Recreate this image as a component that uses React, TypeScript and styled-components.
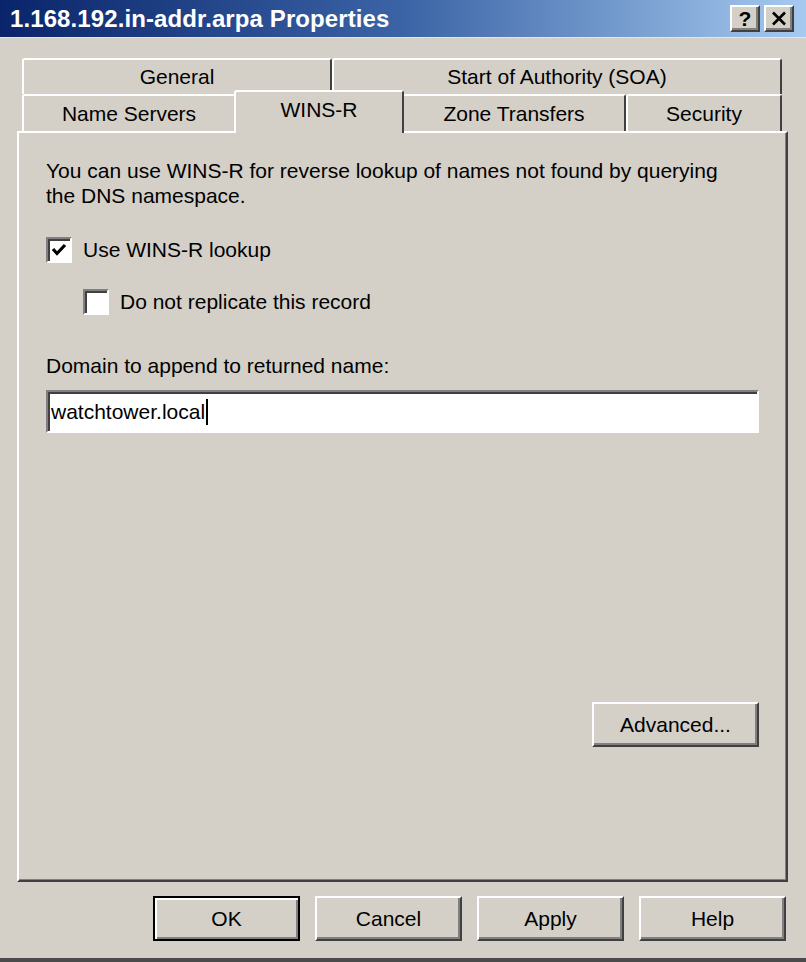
import * as React from 'react';
import styled, { createGlobalStyle, css } from 'styled-components';

const GlobalStyle = createGlobalStyle`
  html, body {
    margin: 0;
    padding: 0;
    background: #d4d0c8;
  }
  body {
    font-family: "Liberation Sans", Arial, sans-serif;
    color: #000;
  }
`;

const raised = css`
  border: 2px solid;
  border-color: #ffffff #404040 #404040 #ffffff;
  box-shadow: inset -2px -2px 0 #808080;
`;

const sunken = css`
  border: 2px solid;
  border-color: #808080 #ffffff #ffffff #808080;
  box-shadow: inset 2px 2px 0 #404040;
`;

const Window = styled.div`
  width: 806px;
  height: 962px;
  box-sizing: border-box;
  background: #d4d0c8;
  border-bottom: 4px solid #4a4a4a;
  display: flex;
  flex-direction: column;
  overflow: hidden;
`;

const TitleBar = styled.div`
  height: 37px;
  border-bottom: 1px solid #e8e6e2;
  background: linear-gradient(90deg, #0a246a 0%, #3b64a6 50%, #a6caf0 100%);
  display: flex;
  align-items: center;
  justify-content: space-between;
  padding: 0 12px 0 10px;
`;

const Title = styled.div`
  color: #fff;
  font-weight: bold;
  font-size: 24px;
  letter-spacing: 0.1px;
`;

const CaptionButtons = styled.div`
  display: flex;
  gap: 4px;
`;

const CaptionButton = styled.div`
  width: 30px;
  height: 27px;
  box-sizing: border-box;
  background: #d4d0c8;
  ${raised};
  display: flex;
  align-items: center;
  justify-content: center;
  font-weight: bold;
  font-size: 21px;
`;

const Body = styled.div`
  padding: 20px 18px 0 17px;
  display: flex;
  flex-direction: column;
`;

const TabRow = styled.div<{ $h: number }>`
  display: flex;
  align-items: flex-end;
  height: ${(p) => p.$h}px;
  padding: 0 6px 0 5px;
`;

const Tab = styled.div<{ $w: number; $selected?: boolean }>`
  width: ${(p) => p.$w}px;
  height: 100%;
  flex-shrink: 0;
  box-sizing: border-box;
  border-top: 2px solid #fff;
  border-left: 2px solid #fff;
  border-right: 2px solid #404040;
  border-radius: 3px 3px 0 0;
  background: #d4d0c8;
  display: flex;
  align-items: center;
  justify-content: center;
  font-size: 21px;
  ${(p) =>
    p.$selected &&
    css`
      position: relative;
      z-index: 2;
      height: 43px;
      margin: 0 -2px -2px;
      width: ${p.$w + 4}px;
      padding-bottom: 6px;
    `}
`;

const Panel = styled.div`
  height: 751px;
  box-sizing: border-box;
  border: 2px solid;
  border-color: #ffffff #404040 #404040 #ffffff;
  box-shadow: inset -1px -1px 0 #808080;
  padding: 25px 27px 0 27px;
  display: flex;
  flex-direction: column;
  font-size: 21px;
`;

const Description = styled.p`
  margin: 0;
  line-height: 25px;
  width: 700px;
`;

const CheckRow = styled.label<{ $indent?: number; $top: number }>`
  display: flex;
  align-items: center;
  gap: 11px;
  height: 26px;
  margin-top: ${(p) => p.$top}px;
  margin-left: ${(p) => p.$indent ?? 0}px;
`;

const CheckBox = styled.span`
  width: 26px;
  height: 26px;
  box-sizing: border-box;
  background: #fff;
  ${sunken};
  display: flex;
  align-items: center;
  justify-content: center;
`;

const FieldLabel = styled.div`
  margin-top: 38px;
  line-height: 25px;
`;

const TextBox = styled.div`
  margin-top: 12px;
  height: 43px;
  width: 713px;
  box-sizing: border-box;
  background: #fff;
  ${sunken};
  display: flex;
  align-items: center;
  padding-left: 3px;
`;

const Caret = styled.span`
  width: 2px;
  height: 26px;
  background: #000;
  margin-left: 1px;
`;

const PushButton = styled.div<{ $default?: boolean }>`
  width: 147px;
  height: 45px;
  box-sizing: border-box;
  background: #d4d0c8;
  ${raised};
  display: flex;
  align-items: center;
  justify-content: center;
  font-size: 21px;
  ${(p) =>
    p.$default &&
    css`
      border: 2px solid #000;
      box-shadow: inset 2px 2px 0 #fff, inset -2px -2px 0 #808080;
    `}
`;

const AdvancedRow = styled.div`
  margin-top: 269px;
  display: flex;
  justify-content: flex-end;
`;

const AdvancedButton = styled(PushButton)`
  width: 167px;
`;

const ButtonRow = styled.div`
  display: flex;
  justify-content: flex-end;
  gap: 15px;
  padding: 14px 2px 0 0;
`;

const CheckMark = () => (
  <svg width="16" height="14" viewBox="0 0 16 14">
    <polyline points="2,6 6,10.5 14,2" fill="none" stroke="#000" strokeWidth="3.2" />
  </svg>
);

const CloseGlyph = () => (
  <svg width="16" height="15" viewBox="0 0 16 15">
    <path d="M2 1.5 L14 13.5 M14 1.5 L2 13.5" stroke="#000" strokeWidth="2.6" />
  </svg>
);

export default function App() {
  return (
    <Window>
      <GlobalStyle />
      <TitleBar>
        <Title>1.168.192.in-addr.arpa Properties</Title>
        <CaptionButtons>
          <CaptionButton>?</CaptionButton>
          <CaptionButton>
            <CloseGlyph />
          </CaptionButton>
        </CaptionButtons>
      </TitleBar>

      <Body>
        <TabRow $h={36}>
          <Tab $w={310}>General</Tab>
          <Tab $w={450}>Start of Authority (SOA)</Tab>
        </TabRow>
        <TabRow $h={37}>
          <Tab $w={214}>Name Servers</Tab>
          <Tab $w={166} $selected>
            WINS-R
          </Tab>
          <Tab $w={224}>Zone Transfers</Tab>
          <Tab $w={156}>Security</Tab>
        </TabRow>

        <Panel>
          <Description>
            You can use WINS-R for reverse lookup of names not found by querying the DNS namespace.
          </Description>

          <CheckRow $top={29}>
            <CheckBox>
              <CheckMark />
            </CheckBox>
            Use WINS-R lookup
          </CheckRow>
          <CheckRow $top={26} $indent={37}>
            <CheckBox />
            Do not replicate this record
          </CheckRow>

          <FieldLabel>Domain to append to returned name:</FieldLabel>
          <TextBox>
            watchtower.local
            <Caret />
          </TextBox>

          <AdvancedRow>
            <AdvancedButton>Advanced...</AdvancedButton>
          </AdvancedRow>
        </Panel>

        <ButtonRow>
          <PushButton $default>OK</PushButton>
          <PushButton>Cancel</PushButton>
          <PushButton>Apply</PushButton>
          <PushButton>Help</PushButton>
        </ButtonRow>
      </Body>
    </Window>
  );
}
